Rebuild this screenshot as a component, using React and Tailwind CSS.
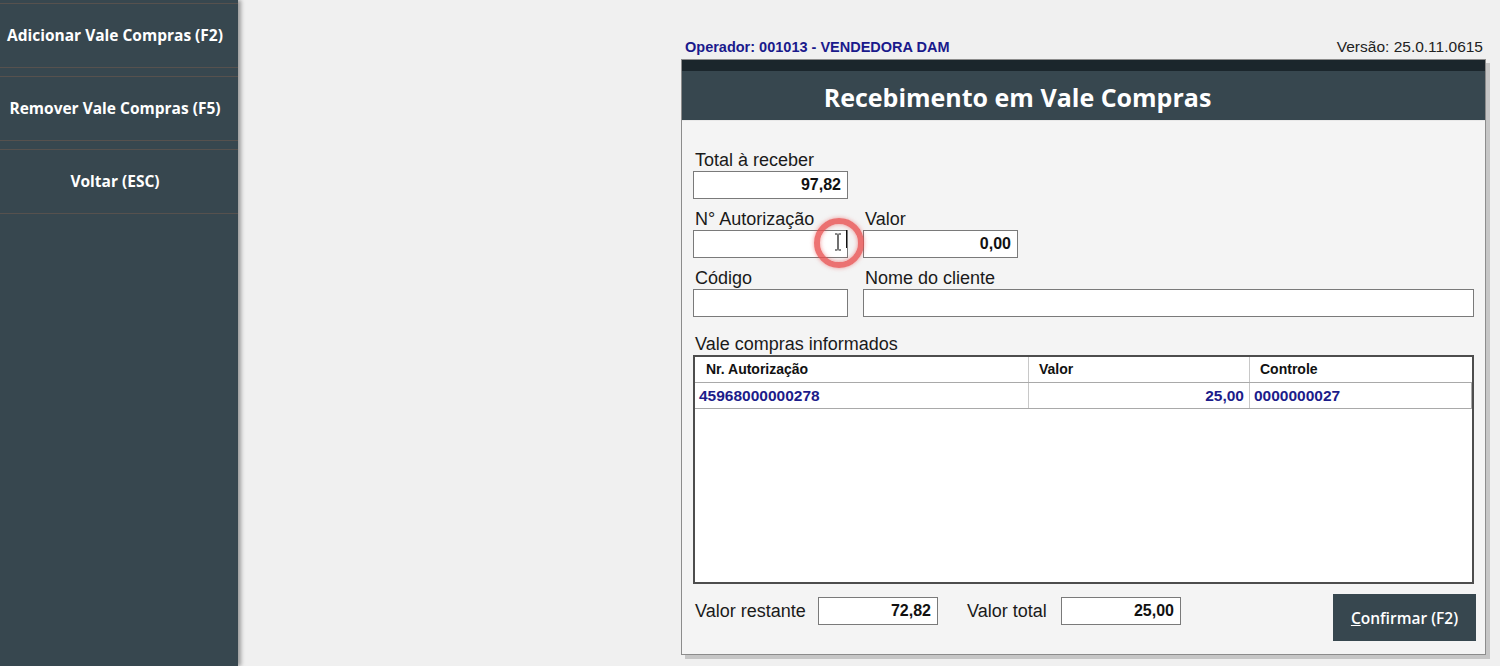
import React from "react";

const arial = { fontFamily: '"Liberation Sans", Arial, sans-serif' };
const open = { fontFamily: '"Open Sans", "Noto Sans", sans-serif' };

function Field({ label, width, value, className = "" }) {
  return (
    <div className={"flex flex-col " + className} style={{ width }}>
      <div className="h-[20px] leading-[20px] text-[18px] text-[#1a1a1a] pl-[2px] whitespace-nowrap translate-y-[1px]">{label}</div>
      <div className="mt-[2px] h-[28px] bg-white border border-[#7a7a7a] flex items-center justify-end pr-[6px] text-[16px] font-bold text-[#111]">
        {value}
      </div>
    </div>
  );
}

export default function App() {
  const side = ["Adicionar Vale Compras (F2)", "Remover Vale Compras (F5)", "Voltar (ESC)"];
  return (
    <div className="w-[1500px] h-[666px] flex bg-[#f0f0f0] overflow-hidden" style={arial}>
      <div className="w-[238px] h-full bg-[#37474f] shadow-[3px_0_4px_rgba(0,0,0,0.35)] z-10 flex flex-col gap-[8px] pt-[3px]" style={open}>
        {side.map((t) => (
          <div key={t} className="h-[65px] border-y border-[#56514e] flex items-center justify-center pr-[8px] text-white font-bold text-[15.5px] whitespace-nowrap">
            {t}
          </div>
        ))}
      </div>
      <div className="flex-1 pl-[443px] pt-[34px]">
        <div className="w-[808px] flex flex-col">
          <div className="flex justify-between items-center h-[25px] pl-[4px] pr-[6px]">
            <span className="text-[14.5px] font-bold text-[#1a1a8c] leading-[20px]">Operador: 001013 - VENDEDORA DAM</span>
            <span className="text-[15.5px] text-[#222] leading-[20px]">Versão: 25.0.11.0615</span>
          </div>
          <div className="w-[805px] h-[596px] border border-[#8c8c8c] bg-[#f4f4f4] shadow-[4px_4px_0_#c6c6c6] flex flex-col">
            <div className="h-[11px] bg-[#1b262c]" />
            <div className="h-[50px] bg-[#37474f] border-b border-[#e8e8e8] flex items-center justify-center pr-[132px] pt-[4px]" style={open}>
              <span className="text-white font-bold text-[25px]">Recebimento em Vale Compras</span>
            </div>
            <div className="flex-1 flex flex-col px-[11px] pt-[28px] relative">
              <Field label="Total à receber" width={155} value="97,82" />
              <div className="flex gap-[15px] mt-[9px]">
                <Field label="N° Autorização" width={155} value="" />
                <Field label="Valor" width={155} value="0,00" />
              </div>
              <div className="flex gap-[15px] mt-[9px]">
                <Field label="Código" width={155} value="" />
                <Field label="Nome do cliente" width={611} value="" />
              </div>
              <div className="mt-[16px] h-[20px] leading-[20px] text-[18px] text-[#1a1a1a] pl-[2px] translate-y-[1px]">Vale compras informados</div>
              <div className="mt-[2px] w-[781px] h-[229px] bg-white border-2 border-[#4d4d4d] flex flex-col">
                <div className="h-[26px] flex border-b border-[#a9a9a9] text-[14px] font-bold text-[#111]">
                  <div className="w-[334px] pl-[11px] flex items-center border-r border-[#c8c8c8]">Nr. Autorização</div>
                  <div className="w-[221px] pl-[10px] flex items-center border-r border-[#c8c8c8]">Valor</div>
                  <div className="w-[222px] pl-[10px] flex items-center">Controle</div>
                </div>
                <div className="h-[26px] flex border-b border-r border-[#a9a9a9] w-[777px] text-[15.5px] font-bold text-[#1c1c8a]">
                  <div className="w-[334px] pl-[4px] flex items-center border-r border-[#c8c8c8]">45968000000278</div>
                  <div className="w-[221px] pr-[5px] flex items-center justify-end border-r border-[#c8c8c8]">25,00</div>
                  <div className="w-[221px] pl-[4px] flex items-center">0000000027</div>
                </div>
              </div>
              <div className="flex items-start mt-[10px]">
                <div className="flex items-center h-[28px] mt-[3px]">
                  <span className="text-[18px] text-[#1a1a1a] pl-[2px] w-[125px] whitespace-nowrap">Valor restante</span>
                  <div className="w-[120px] h-[28px] bg-white border border-[#7a7a7a] flex items-center justify-end pr-[6px] text-[16px] font-bold text-[#111]">72,82</div>
                  <span className="text-[18px] text-[#1a1a1a] ml-[29px] w-[94px] whitespace-nowrap">Valor total</span>
                  <div className="w-[120px] h-[28px] bg-white border border-[#7a7a7a] flex items-center justify-end pr-[6px] text-[16px] font-bold text-[#111]">25,00</div>
                </div>
                <button className="ml-auto mr-[-2px] w-[143px] h-[47px] pt-[3px] bg-[#37474f] text-white text-[15.5px] font-semibold" style={open}>
                  <span className="underline">C</span>onfirmar (F2)
                </button>
              </div>
              <div className="absolute left-[132px] top-[97px] w-[50px] h-[50px] rounded-full border-[6px] border-[rgba(232,80,80,0.8)] shadow-[0_0_4px_rgba(232,70,70,0.55),inset_0_0_4px_rgba(232,70,70,0.55)] flex items-center justify-center">
                <svg width="10" height="18" viewBox="0 0 10 18" className="ml-[-3px] mt-[-2px]">
                  <path d="M2 1h2.5M5.5 1H8M5 1.5v15M2 17h2.5M5.5 17H8" stroke="#111" strokeWidth="1.2" fill="none" />
                </svg>
                <div className="absolute left-[26px] top-[6px] w-[1px] h-[18px] bg-[#111]" />
              </div>
            </div>
          </div>
        </div>
      </div>
    </div>
  );
}
